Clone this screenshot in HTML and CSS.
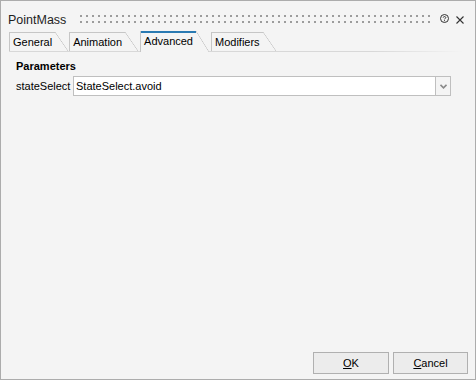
FILE: index.html
```html
<!DOCTYPE html>
<html lang="en">
<head>
  <meta charset="UTF-8">
  <meta name="viewport" content="width=device-width, initial-scale=1.0">
  <title>PointMass</title>
  <link rel="stylesheet" href="styles.css">
</head>
<body>
  <div class="dialog">
    <div class="titlebar">
      <span class="title">PointMass</span>
      <svg class="grip" height="8" shape-rendering="crispEdges">
        <defs>
          <pattern id="dots" width="6" height="6" patternUnits="userSpaceOnUse">
            <rect width="2" height="2" fill="#9c9c9c"/>
          </pattern>
        </defs>
        <rect width="100%" height="8" fill="url(#dots)"/>
      </svg>
      <svg class="help" width="9" height="9" viewBox="0 0 9 9">
        <circle cx="4.5" cy="4.5" r="4" fill="none" stroke="#333" stroke-width="1"/>
        <path d="M3.2 3.6 C3.2 2.2 5.8 2.2 5.8 3.6 C5.8 4.5 4.5 4.5 4.5 5.4" fill="none" stroke="#333" stroke-width="1"/>
        <rect x="4" y="6.2" width="1" height="1" fill="#333"/>
      </svg>
      <svg class="close" width="8" height="8" viewBox="0 0 8 8">
        <path d="M0.5 0.5 L7.5 7.5 M7.5 0.5 L0.5 7.5" stroke="#333" stroke-width="1.1"/>
      </svg>
    </div>

    <div class="tabs">
      <div class="tab">General</div>
      <div class="tab">Animation</div>
      <div class="tab active">Advanced</div>
      <div class="tab">Modifiers</div>
    </div>

    <div class="panel">
      <div class="group-title">Parameters</div>
      <div class="param-row">
        <span class="param-label">stateSelect</span>
        <div class="combo">
          <div class="combo-value">StateSelect.avoid</div>
          <div class="combo-btn">
            <svg width="7" height="5" viewBox="0 0 7 5">
              <path d="M0.5 0.8 L3.5 3.8 L6.5 0.8" fill="none" stroke="#8a8a8a" stroke-width="1.6"/>
            </svg>
          </div>
        </div>
      </div>
    </div>

    <div class="footer">
      <button class="btn ok"><u>O</u>K</button>
      <button class="btn"><u>C</u>ancel</button>
    </div>
  </div>
</body>
</html>
```

FILE: styles.css
```css
body {
  margin: 0;
  font-family: 'Liberation Sans', Arial, sans-serif;
  font-size: 11px;
  color: #000;
  background: #f4f4f4;
}
.dialog {
  width: 476px;
  height: 380px;
  box-sizing: border-box;
  border: 1px solid #acacac;
  background: #f4f4f4;
  display: flex;
  flex-direction: column;
}
.titlebar {
  display: flex;
  align-items: center;
  height: 22px;
  margin-top: 8px;
  padding: 0 11px 0 7px;
}
.title {
  width: 56px;
  flex: none;
  white-space: nowrap;
  font-size: 12.5px;
  color: #1e1e1e;
}
.grip {
  flex: 1;
  margin: 0 10px 2px 16px;
}
.help {
  margin-bottom: 3px;
}
.close {
  margin-left: 7px;
}
.tabs {
  display: flex;
  align-items: flex-end;
  height: 21px;
  box-sizing: border-box;
  padding-bottom: 1px;
  margin: 0 12px 0 8px;
  background: linear-gradient(to right, #d8d8d8 80%, rgba(216, 216, 216, 0) 100%) left bottom / 100% 1px no-repeat;
}
.tab {
  box-sizing: border-box;
  height: 19px;
  margin-right: 1px;
  padding: 4px 16px 0 3px;
  line-height: 13px;
  border-left: 1px solid #c6c6c6;
  background-image:
    linear-gradient(#c6c6c6, #c6c6c6),
    linear-gradient(to top right, transparent calc(50% - 0.6px), #c6c6c6 50%, transparent calc(50% + 0.6px));
  background-size: calc(100% - 13px) 1px, 13px 100%;
  background-position: left top, right top;
  background-repeat: no-repeat;
}
.tab.active {
  height: 21px;
  margin: 0 2px -1px 1px;
  background-color: #f4f4f4;
  background-image:
    linear-gradient(#2a7ab2, #2a7ab2),
    linear-gradient(to top right, transparent calc(50% - 0.6px), #c6c6c6 50%, transparent calc(50% + 0.6px));
  background-size: calc(100% - 13px) 2px, 13px 100%;
}
.panel {
  padding: 8px 24px 0 15px;
}
.group-title {
  font-weight: bold;
  line-height: 13px;
  margin-bottom: 3px;
}
.param-row {
  display: flex;
  align-items: center;
}
.param-label {
  width: 57px;
  flex: none;
}
.combo {
  flex: 1;
  display: flex;
  height: 20px;
}
.combo-value {
  flex: 1;
  box-sizing: border-box;
  border: 1px solid #bfbfbf;
  background: #fff;
  padding-left: 2px;
  line-height: 18px;
}
.combo-btn {
  width: 16px;
  box-sizing: border-box;
  margin-left: -1px;
  border: 1px solid #bfbfbf;
  background: #f4f4f4;
  display: flex;
  align-items: center;
  justify-content: center;
}
.footer {
  margin-top: auto;
  display: flex;
  justify-content: flex-end;
  gap: 4px;
  padding: 0 7px 5px 0;
}
.btn {
  width: 75px;
  height: 22px;
  box-sizing: border-box;
  border: 1px solid #b0b0b0;
  background: #ececec;
  font-family: 'Liberation Sans', Arial, sans-serif;
  font-size: 11px;
  color: #000;
  padding: 0;
}
.btn.ok {
  width: 76px;
}
```
